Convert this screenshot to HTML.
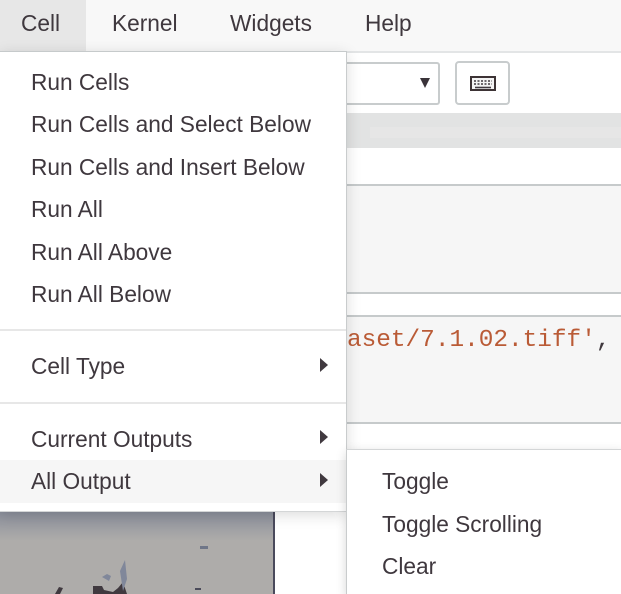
<!DOCTYPE html>
<html><head><meta charset="utf-8"><style>
html,body{margin:0;padding:0;background:#fff}
#p{position:relative;width:621px;height:594px;overflow:hidden;background:#fff;font-family:"Liberation Sans",sans-serif;color:#40393f}
.a{position:absolute}
.t{position:absolute;font-size:22.7px;line-height:28px;white-space:nowrap;color:#3f383e}
.tri{position:absolute;width:0;height:0;border-left:8px solid #40393f;border-top:7px solid transparent;border-bottom:7px solid transparent}
.ln{position:absolute;height:2px;background:#c6cacb}
</style></head><body><div id="p">
<div class="a" style="left:0;top:0;width:621px;height:51px;background:#f8f8f8"></div>
<div class="a" style="left:0;top:0;width:86px;height:51px;background:#e7e7e7"></div>
<div class="a" style="left:0;top:51px;width:621px;height:2px;background:#e3e5e6"></div>
<div class="t" style="left:21px;top:9px">Cell</div>
<div class="t" style="left:112px;top:9px">Kernel</div>
<div class="t" style="left:230px;top:9px">Widgets</div>
<div class="t" style="left:365px;top:9px">Help</div>

<div class="a" style="left:340px;top:62px;width:96px;height:39px;border:2px solid #c8cccd;border-radius:3px;background:#fff"></div>
<div class="a" style="left:420px;top:78px;width:0;height:0;border-top:10px solid #3a3339;border-left:5px solid transparent;border-right:5px solid transparent"></div>
<div class="a" style="left:455px;top:61px;width:51px;height:40px;border:2px solid #c8cccd;border-radius:4px;background:#fff"></div>
<svg class="a" style="left:470px;top:76px" width="26" height="16" viewBox="0 0 26 16"><rect x="1" y="1" width="24" height="13" fill="#f4f4f4" stroke="#3d3335" stroke-width="2"/><path d="M4 5h18M4 8h18" stroke="#40393f" stroke-width="1.6" stroke-dasharray="2 1.5"/><path d="M5 11.5h16" stroke="#40393f" stroke-width="1.6"/></svg>

<div class="a" style="left:347px;top:113px;width:274px;height:35px;background:#e2e3e3"></div>
<div class="a" style="left:370px;top:127px;width:251px;height:11px;background:#e6e6e6"></div>

<div class="a" style="left:347px;top:184px;width:274px;height:110px;background:#f6f6f6"></div>
<div class="ln" style="left:347px;top:184px;width:274px"></div>
<div class="ln" style="left:347px;top:292px;width:274px"></div>

<div class="a" style="left:347px;top:316px;width:274px;height:108px;background:#f6f6f6"></div>
<div class="ln" style="left:347px;top:315px;width:274px"></div>
<div class="ln" style="left:347px;top:422px;width:274px"></div>
<div class="a" style="left:347px;top:326px;font-family:'Liberation Mono',monospace;font-size:24.4px;line-height:30px;white-space:pre;color:#ba5b36">aset/7.1.02.tiff'<span style="color:#40393f">,</span></div>

<div class="a" style="left:0;top:511px;width:274px;height:83px;background:#aeacaa"></div>
<div class="a" style="left:0;top:511px;width:274px;height:30px;background:linear-gradient(#8a8e9b,#aeacaa)"></div>
<div class="a" style="left:273px;top:511px;width:2px;height:83px;background:#4a4a5c"></div>
<svg class="a" style="left:0;top:511px" width="274" height="83" viewBox="0 0 274 83"><path d="M55 83l4-7 4 1-3 6zM93 83V75h9l2 4 9 2 5-4 5-6 4 12z" fill="#40393f"/><path d="M102 66l5-3 4 2-2 5zM120 60l5-11 2 19-4 12z" fill="#80879a"/><rect x="200" y="35" width="8" height="3" fill="#6f7688"/><rect x="195" y="77" width="6" height="2" fill="#4b4b5a"/></svg>

<div class="a" style="left:0;top:51px;width:346px;height:459px;background:#fff;box-shadow:0 3px 14px rgba(0,0,0,.14);border-right:1px solid #c9cccd;border-bottom:1px solid #d4d6d7;border-top:1px solid #c6cacb;box-sizing:content-box"></div>
<div class="a" style="left:0;top:460px;width:346px;height:43px;background:#f6f6f6"></div>
<div class="a" style="left:0;top:329px;width:346px;height:2px;background:#e7e7e7"></div>
<div class="a" style="left:0;top:402px;width:346px;height:2px;background:#e7e7e7"></div>
<div class="t" style="left:31px;top:68px">Run Cells</div>
<div class="t" style="left:31px;top:110px">Run Cells and Select Below</div>
<div class="t" style="left:31px;top:153px">Run Cells and Insert Below</div>
<div class="t" style="left:31px;top:195px">Run All</div>
<div class="t" style="left:31px;top:238px">Run All Above</div>
<div class="t" style="left:31px;top:280px">Run All Below</div>
<div class="t" style="left:31px;top:352px">Cell Type</div>
<div class="t" style="left:31px;top:425px">Current Outputs</div>
<div class="t" style="left:31px;top:467px">All Output</div>
<div class="tri" style="left:320px;top:358px"></div>
<div class="tri" style="left:320px;top:430px"></div>
<div class="tri" style="left:320px;top:473px"></div>

<div class="a" style="left:346px;top:449px;width:275px;height:145px;background:#fff;border-left:1px solid #c9cccd;border-top:1px solid #d4d6d7;box-shadow:0 3px 10px rgba(0,0,0,.16)"></div>
<div class="t" style="left:382px;top:467px">Toggle</div>
<div class="t" style="left:382px;top:510px">Toggle Scrolling</div>
<div class="t" style="left:382px;top:552px">Clear</div>
</div></body></html>
